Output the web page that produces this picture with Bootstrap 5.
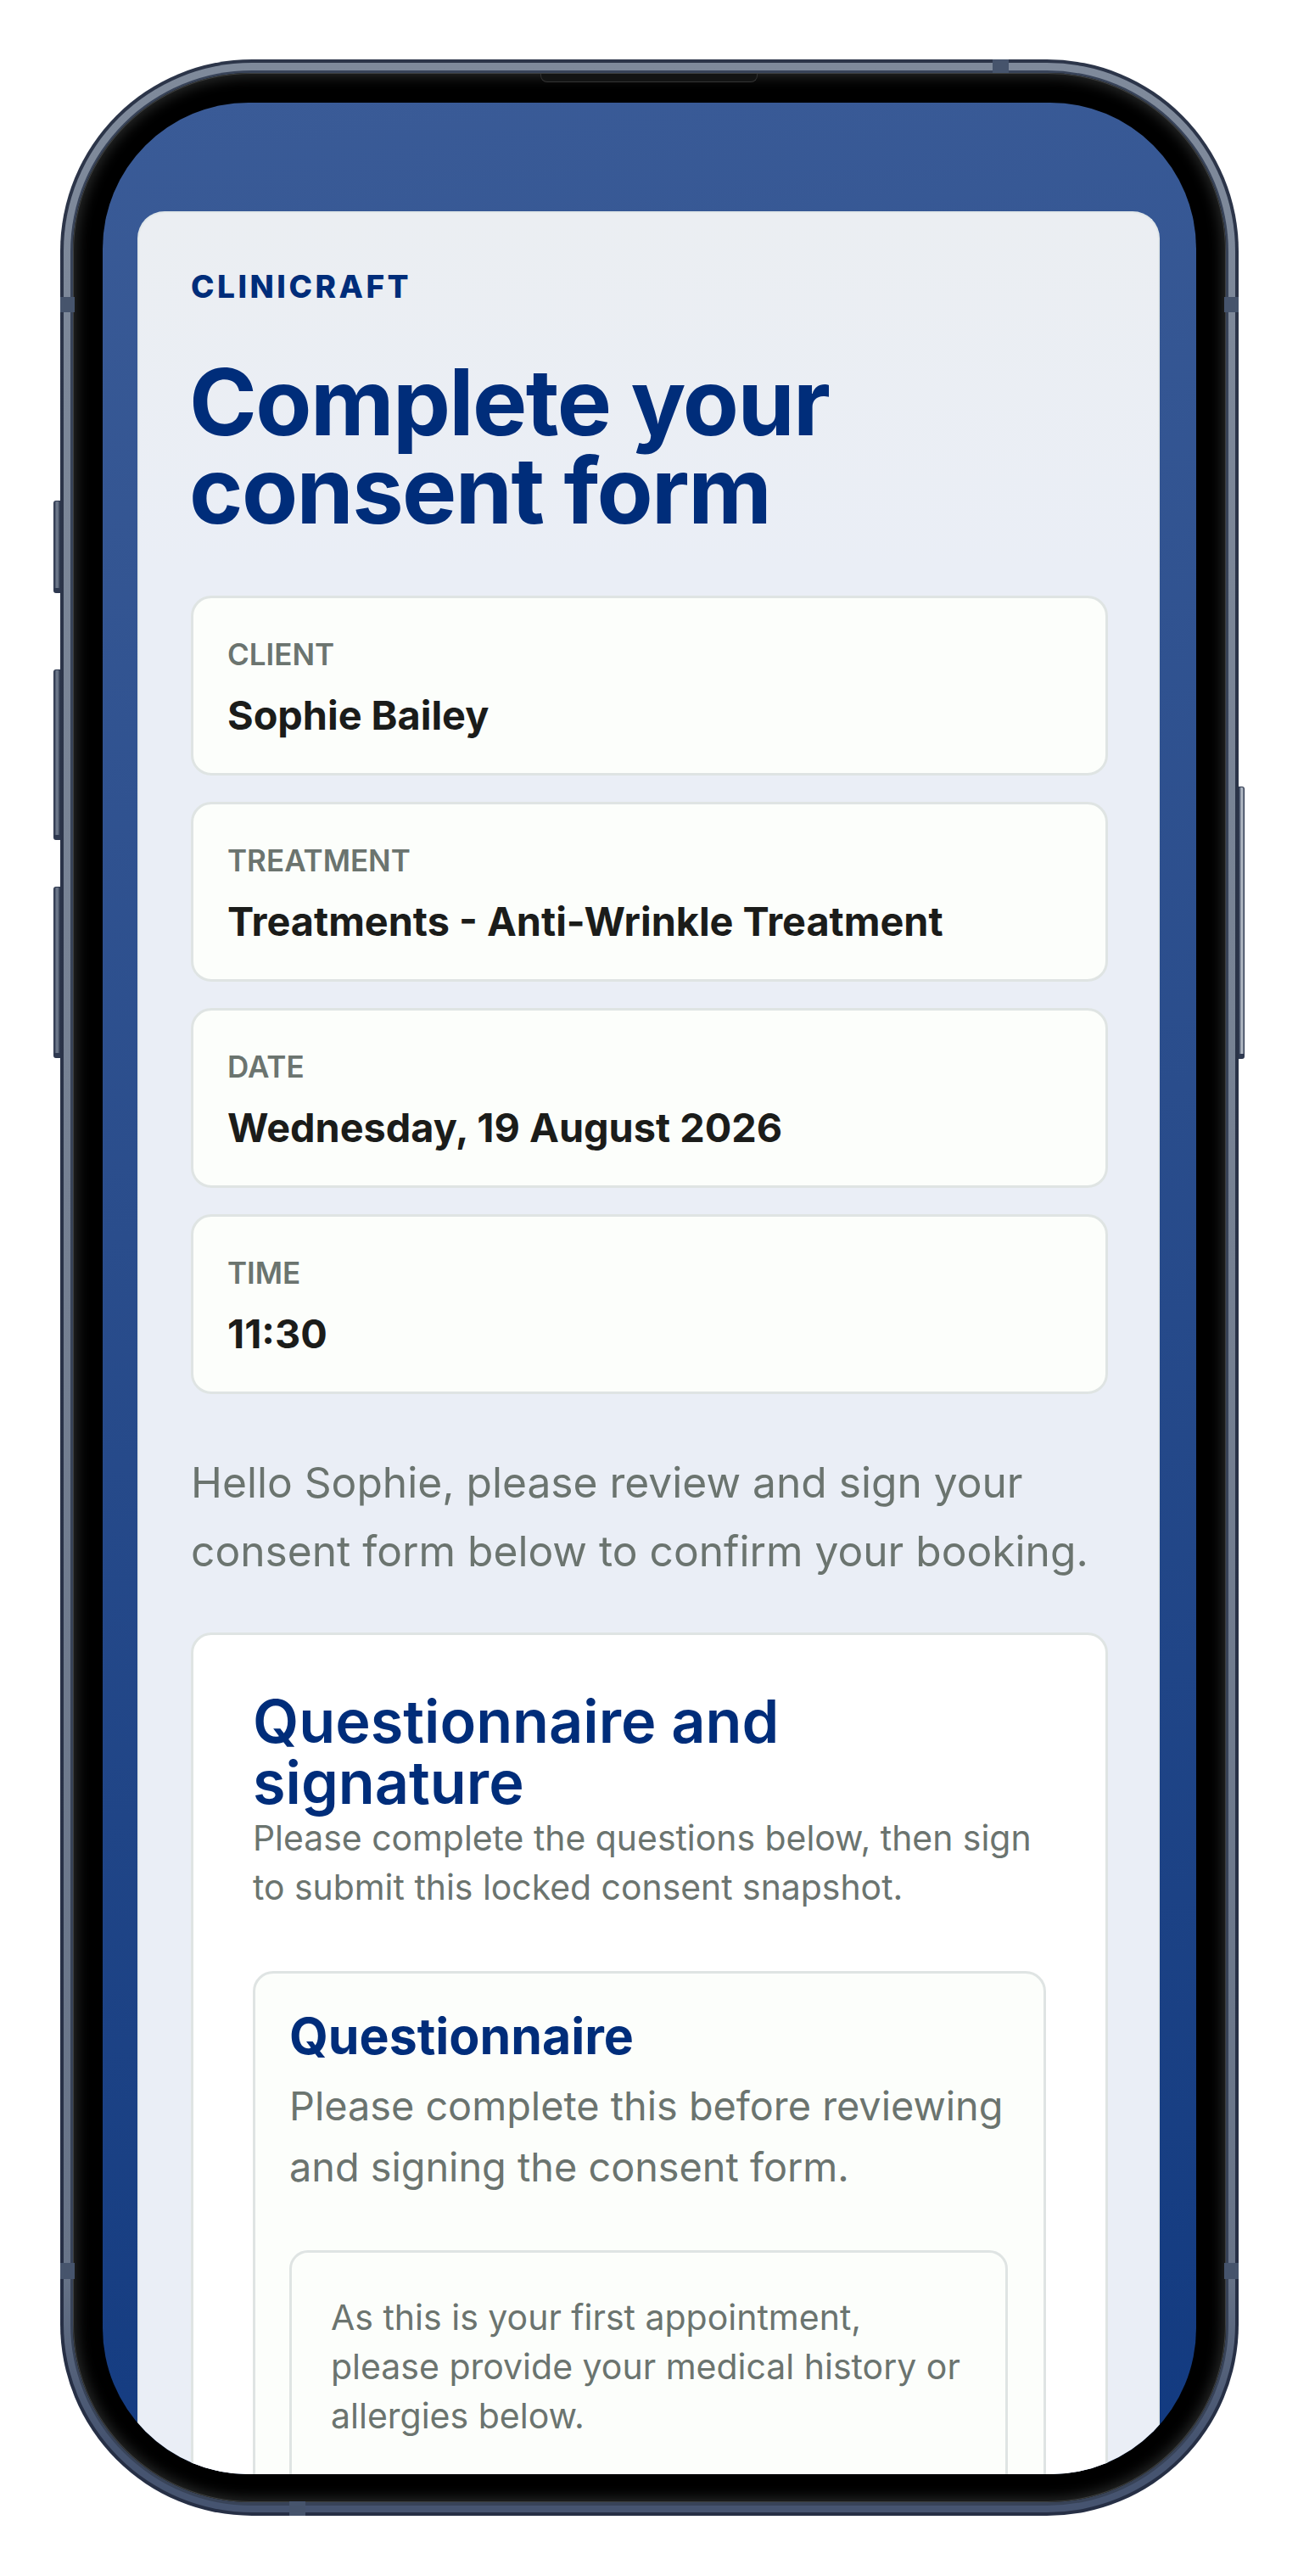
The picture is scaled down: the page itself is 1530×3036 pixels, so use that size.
<!DOCTYPE html>
<html lang="en">
<head>
<meta charset="utf-8">
<title>Complete your consent form</title>
<link rel="stylesheet" href="https://cdn.jsdelivr.net/npm/bootstrap@5.3.0/dist/css/bootstrap.min.css">
<style>
html,body{background:#fff;font-family:"Inter","Liberation Sans",sans-serif}
.stage{padding:70px 70px 71px 71px}
.device{position:relative;width:1389px;height:2895px}
.device-rim{height:100%;padding:4px;border-radius:226px;background:linear-gradient(180deg,#2c3549,#262f45)}
.device-metal{height:100%;padding:9px 8px 8px 8px;border-radius:222px;background:linear-gradient(180deg,#7f8a9b 0,#758092 50%,#687488 90%,#465470 97%,#465470 100%)}
.device-inner{height:100%;padding:3px 3px 4px 3px;border-radius:214px;background:#384358}
.device-bezel{height:100%;padding:35px 35px 33px 35px;border-radius:210px;background:#000;box-shadow:inset 0 0 0 1px #3d3f3f,inset 0 0 16px 4px #2a2c2c}
.device-screen{height:100%;overflow:hidden;border-radius:172px;background:linear-gradient(172deg,#3a5b97 0,#2a4d8c 45%,#123a80 100%)}
.side-key{position:absolute;width:8px;background:linear-gradient(90deg,#2f3950,#778294 50%,#454f63);border-radius:3px 0 0 3px;border:1px solid #2f3950;border-bottom-width:6px}
.key-a{left:-8px;top:520px;height:109px}
.key-b{left:-8px;top:719px;height:201px}
.key-c{left:-8px;top:975px;height:202px}
.key-d{right:-7px;top:857px;height:321px;width:7px;border-radius:0 3px 3px 0;background:linear-gradient(90deg,#4a556b,#c9d0d8 60%,#5a6478)}
.seam{position:absolute;background:#46546c}
.seam-l1{left:0;top:280px;width:17px;height:18px}
.seam-l2{left:0;top:2597px;width:17px;height:19px}
.seam-r1{right:0;top:280px;width:17px;height:18px}
.seam-r2{right:0;top:2597px;width:17px;height:19px}
.seam-t{left:1099px;top:0;width:19px;height:16px}
.seam-b{left:270px;bottom:0;width:19px;height:17px}
.speaker{position:absolute;left:566px;top:17px;width:256px;height:10px;background:#131414;border:1px solid #333;border-top:0;border-radius:0 0 8px 8px}
.sheet{margin:128px 43px 0 41px;padding:65px 59px 0 61px;min-height:3000px;border:2px solid #e2e8ea;border-bottom:0;border-radius:32px;background:linear-gradient(180deg,#ebeef2 0,#eaeef6 420px)}
.brand-mark{font-size:37px;line-height:44px;font-weight:800;letter-spacing:3.5px;color:#002d7a;margin-bottom:62px}
.page-title{font-size:108px;line-height:104px;font-weight:700;letter-spacing:-1.6px;color:#002d7a;margin:0 0 72px -2px}
.fact-stack{gap:31px;margin-bottom:64px}
.fact{height:212px;padding:46px 40px 0;background:#fcfefb;border:3px solid #dfe4e3;border-radius:24px}
.fact-label{font-size:35px;line-height:40px;font-weight:600;color:#6b746f;margin-bottom:23px}
.fact-value{font-size:46.8px;line-height:58px;font-weight:700;color:#1b1c1a}
.intro{font-size:49.7px;line-height:81px;color:#6b746f;margin-bottom:55px}
.form-box{background:#fff;border:3px solid #dfe4e3;border-radius:24px;padding:66px 70px 0;min-height:1100px}
.form-title{font-size:70.2px;line-height:72px;font-weight:600;color:#002d7a;margin:0}
.form-lead{font-size:40.9px;line-height:58px;color:#6b746f;margin-bottom:70px}
.quest-box{background:#fcfefb;border:3px solid #dfe4e3;border-radius:24px;padding:38px 42px 0 40px;min-height:900px}
.quest-title{font-size:59px;line-height:72px;font-weight:700;color:#002d7a;margin:0 0 10px}
.quest-lead{font-size:46.8px;line-height:72px;color:#6b746f;margin-bottom:62px}
.note-box{background:#fcfefb;border:3px solid #dfe4e3;border-radius:22px;padding:47px 46px 0;min-height:500px}
.note-text{font-size:41px;line-height:58px;color:#6b746f;margin:0}
</style>
</head>
<body class="m-0">
<div class="stage">
<div class="device">
  <div class="side-key key-a"></div>
  <div class="side-key key-b"></div>
  <div class="side-key key-c"></div>
  <div class="side-key key-d"></div>
  <div class="device-rim">
    <div class="device-metal">
      <div class="device-inner">
      <div class="device-bezel">
        <div class="device-screen">
          <main class="sheet">
            <div class="brand-mark">CLINICRAFT</div>
            <h1 class="page-title">Complete your<br>consent form</h1>
            <div class="fact-stack d-flex flex-column">
              <div class="fact"><div class="fact-label">CLIENT</div><div class="fact-value">Sophie Bailey</div></div>
              <div class="fact"><div class="fact-label">TREATMENT</div><div class="fact-value">Treatments - Anti-Wrinkle Treatment</div></div>
              <div class="fact"><div class="fact-label">DATE</div><div class="fact-value">Wednesday, 19 August 2026</div></div>
              <div class="fact"><div class="fact-label">TIME</div><div class="fact-value">11:30</div></div>
            </div>
            <p class="intro">Hello Sophie, please review and sign your consent form below to confirm your booking.</p>
            <section class="form-box">
              <h2 class="form-title">Questionnaire and signature</h2>
              <p class="form-lead">Please complete the questions below, then sign to submit this locked consent snapshot.</p>
              <div class="quest-box">
                <h3 class="quest-title">Questionnaire</h3>
                <p class="quest-lead">Please complete this before reviewing and signing the consent form.</p>
                <div class="note-box">
                  <p class="note-text">As this is your first appointment, please provide your medical history or allergies below.</p>
                </div>
              </div>
            </section>
          </main>
        </div>
      </div>
      </div>
    </div>
  </div>
  <div class="seam seam-l1"></div><div class="seam seam-l2"></div>
  <div class="seam seam-r1"></div><div class="seam seam-r2"></div>
  <div class="seam seam-t"></div><div class="seam seam-b"></div>
  <div class="speaker"></div>
</div>
</div>
<script src="https://cdn.jsdelivr.net/npm/bootstrap@5.3.0/dist/js/bootstrap.bundle.min.js"></script>
</body>
</html>
